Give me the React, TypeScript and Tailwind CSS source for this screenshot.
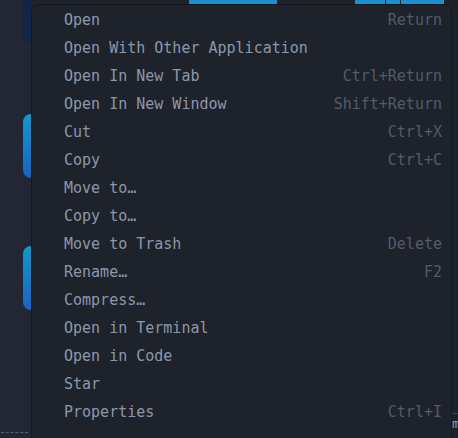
import React from "react";

const items: [string, string][] = [
  ["Open", "Return"],
  ["Open With Other Application", ""],
  ["Open In New Tab", "Ctrl+Return"],
  ["Open In New Window", "Shift+Return"],
  ["Cut", "Ctrl+X"],
  ["Copy", "Ctrl+C"],
  ["Move to…", ""],
  ["Copy to…", ""],
  ["Move to Trash", "Delete"],
  ["Rename…", "F2"],
  ["Compress…", ""],
  ["Open in Terminal", ""],
  ["Open in Code", ""],
  ["Star", ""],
  ["Properties", "Ctrl+I"],
];

export default function App() {
  return (
    <div
      className="relative flex w-[458px] h-[438px] overflow-hidden bg-[#1d212a]"
      style={{ fontFamily: '"DejaVu Sans Mono", "Liberation Mono", monospace' }}
    >
      {/* background sidebar */}
      <div className="flex w-[31px] shrink-0 flex-col items-end bg-[#232734]">
        <div className="h-[44px] w-[8px] rounded-bl-[6px] bg-[#0f2647]" />
        <div className="mt-[70px] h-[64px] w-[8px] rounded-l-[8px] bg-gradient-to-b from-[#1597c9] to-[#1a63c4]" />
        <div className="mt-[68px] h-[64px] w-[8px] rounded-l-[8px] bg-gradient-to-b from-[#1597c9] to-[#1a63c4]" />
        <div className="mt-auto mb-[5px] ml-px w-[27px] self-start border-t border-dashed border-[#5a6272]" />
      </div>
      {/* background main area */}
      <div className="flex flex-1 flex-col">
        <div className="flex h-[4px] pl-[158px]">
          <div className="w-[88px] bg-[#1a8fd0]" />
          <div className="ml-[78px] w-[30px] bg-[#1a8fd0]" />
          <div className="ml-px w-[14px] bg-[#1a8fd0]" />
          <div className="ml-px w-[43px] bg-[#1a8fd0]" />
        </div>
        <div className="mt-auto mb-[8px] flex justify-end">
          <div className="w-[6px] overflow-hidden border-t border-[#3a4150] pt-[3px] text-[13px] leading-[13px] text-[#8d99ab]">m</div>
        </div>
      </div>

      {/* context menu */}
      <div className="absolute left-[31px] top-[4px] w-[421px] h-[440px] rounded-t-[8px] border border-[#14171d] bg-[#1e222b] pt-px">
        {items.map(([label, key]) => (
          <div
            key={label}
            className="flex h-[28px] items-center justify-between pl-[32px] pr-[9px] text-[15px]"
          >
            <span className="text-[#8c98aa]">{label}</span>
            <span className="text-[#525c6d]">{key}</span>
          </div>
        ))}
      </div>
    </div>
  );
}
